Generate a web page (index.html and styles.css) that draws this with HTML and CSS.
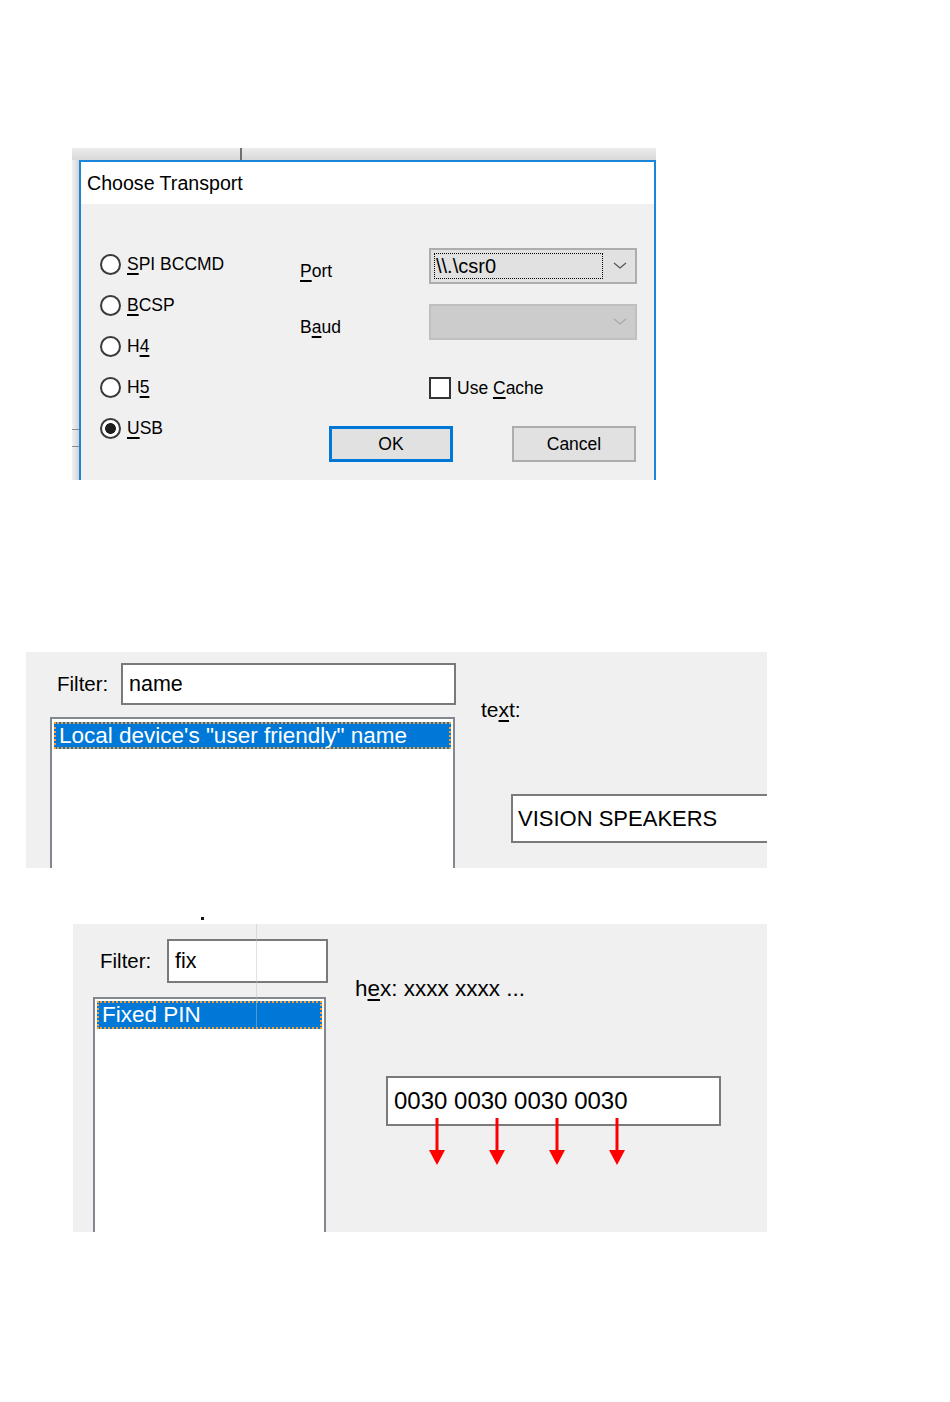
FILE: index.html
```html
<!DOCTYPE html>
<html>
<head>
<meta charset="utf-8">
<title>Transport and PS keys</title>
<link rel="stylesheet" href="styles.css">
</head>
<body>
<div class="shot1">
  <div class="dlg">
    <div class="titlebar">Choose Transport</div>
    <div class="dlg-body">
      <div class="radios">
        <div class="radio"><span class="rb"></span><span><u>S</u>PI BCCMD</span></div>
        <div class="radio"><span class="rb"></span><span><u>B</u>CSP</span></div>
        <div class="radio"><span class="rb"></span><span>H<u>4</u></span></div>
        <div class="radio"><span class="rb"></span><span>H<u>5</u></span></div>
        <div class="radio"><span class="rb on"></span><span><u>U</u>SB</span></div>
      </div>
      <div class="settings">
        <div class="field">
          <span class="flabel"><u>P</u>ort</span>
          <div class="combo">
            <span class="focus">\\.\csr0</span>
            <svg class="chev" width="14" height="8" viewBox="0 0 14 8"><polyline points="1,1 7,6 13,1" fill="none" stroke="#555" stroke-width="1.3"/></svg>
          </div>
        </div>
        <div class="field baud">
          <span class="flabel">B<u>a</u>ud</span>
          <div class="combo disabled">
            <svg class="chev" width="14" height="8" viewBox="0 0 14 8"><polyline points="1,1 7,6 13,1" fill="none" stroke="#a8a8a8" stroke-width="1.3"/></svg>
          </div>
        </div>
        <div class="check"><span class="cb"></span><span>Use <u>C</u>ache</span></div>
        <div class="buttons">
          <div class="btn default">OK</div>
          <div class="btn">Cancel</div>
        </div>
      </div>
    </div>
  </div>
</div>

<div class="shot2">
  <div class="left2">
    <div class="filter-row">
      <span class="flt-label">Filter:</span>
      <div class="input in2">name</div>
    </div>
    <div class="list list2">
      <div class="item item2">Local device's "user friendly" name</div>
    </div>
  </div>
  <div class="right2">
    <div class="plabel">te<u>x</u>t:</div>
    <div class="valbox val2">VISION SPEAKERS</div>
  </div>
</div>

<div class="mark"></div>

<div class="shot3">
  <div class="left3">
    <div class="filter-row fr3">
      <span class="flt-label fl3">Filter:</span>
      <div class="input in3">fix</div>
    </div>
    <div class="list list3">
      <div class="item item3">Fixed PIN</div>
    </div>
  </div>
  <div class="right3">
    <div class="plabel hexlabel">h<u>e</u>x: xxxx xxxx ...</div>
    <div class="valbox val3">0030 0030 0030 0030
      <svg class="arrows" width="335" height="95" viewBox="0 0 335 95">
        <g fill="#ff0000" stroke="#ff0000">
          <line x1="51" y1="42" x2="51" y2="76" stroke-width="3"/>
          <polygon points="43,74 59,74 51,89" stroke="none"/>
          <line x1="111" y1="42" x2="111" y2="76" stroke-width="3"/>
          <polygon points="103,74 119,74 111,89" stroke="none"/>
          <line x1="171" y1="42" x2="171" y2="76" stroke-width="3"/>
          <polygon points="163,74 179,74 171,89" stroke="none"/>
          <line x1="231" y1="42" x2="231" y2="76" stroke-width="3"/>
          <polygon points="223,74 239,74 231,89" stroke="none"/>
        </g>
      </svg>
    </div>
  </div>
</div>
</body>
</html>
```

FILE: styles.css
```css
* { box-sizing: border-box; }

body {
  margin: 0;
  background: #ffffff;
  color: #000;
  font-family: "Liberation Sans", Arial, sans-serif;
}

u {
  text-decoration-thickness: 2px;
  text-underline-offset: 3px;
}

/* ---------- Dialog screenshot ---------- */
.shot1 {
  position: relative;
  margin: 148px 0 0 72px;
  width: 584px;
  height: 332px;
  padding: 12px 0 0 7px;
  background:
    linear-gradient(to bottom, #ececec, #d9d9d9) left top / 100% 12px no-repeat,
    linear-gradient(to right, #f3f3f3, #d3d3d3) left top / 7px 100% no-repeat;
}
.shot1::before {
  content: "";
  position: absolute;
  left: 168px;
  top: 0;
  width: 2px;
  height: 12px;
  background: #707070;
}
.shot1::after {
  content: "";
  position: absolute;
  left: 0;
  top: 281px;
  width: 7px;
  height: 16px;
  border-top: 1px solid #8a8a8a;
  border-bottom: 1px solid #8a8a8a;
}

.dlg {
  width: 577px;
  height: 320px;
  border: 2px solid #1a86d9;
  border-bottom: none;
  display: flex;
  flex-direction: column;
}

.titlebar {
  height: 42px;
  flex: none;
  background: #fff;
  display: flex;
  align-items: center;
  padding-left: 6px;
  font-size: 19.6px;
}

.dlg-body {
  flex: 1;
  background: #f0f0f0;
  display: flex;
  font-size: 17.5px;
}

.radios {
  width: 219px;
  padding: 40px 0 0 19px;
  display: flex;
  flex-direction: column;
}
.radio {
  height: 41px;
  display: flex;
  align-items: center;
  gap: 6px;
}
.rb {
  width: 21px;
  height: 21px;
  border: 2px solid #3a3a3a;
  border-radius: 50%;
  background: #fff;
  flex: none;
}
.rb.on {
  background: radial-gradient(circle, #1e1e1e 0 5px, #fff 5.8px);
}

.settings {
  display: flex;
  flex-direction: column;
}
.field {
  display: flex;
  align-items: center;
  margin-top: 44px;
  height: 36px;
}
.field.baud { margin-top: 20px; }
.flabel {
  width: 129px;
  padding-top: 10px;
}
.combo {
  width: 208px;
  height: 36px;
  border: 2px solid #adadad;
  background: #e1e1e1;
  display: flex;
  align-items: center;
  padding: 3px 8px 3px 3px;
}
.combo.disabled {
  background: #cccccc;
  border-color: #bfbfbf;
}
.focus {
  width: 169px;
  height: 26px;
  border: 1px dotted #000;
  padding-left: 1px;
  font-size: 20px;
  line-height: 24px;
}
.chev { margin-left: auto; }

.check {
  margin-top: 37px;
  padding-left: 129px;
  display: flex;
  align-items: center;
  gap: 6px;
  height: 22px;
}
.cb {
  width: 22px;
  height: 22px;
  border: 2px solid #333;
  background: #fff;
}

.buttons {
  margin-top: 27px;
  padding-left: 29px;
  display: flex;
  gap: 59px;
}
.btn {
  width: 124px;
  height: 36px;
  border: 2px solid #adadad;
  background: #e1e1e1;
  display: flex;
  align-items: center;
  justify-content: center;
}
.btn.default {
  border: 3px solid #0078d7;
}

/* ---------- Filter panels ---------- */
.shot2 {
  margin: 172px 0 0 26px;
  width: 741px;
  height: 216px;
  background: #f0f0f0;
  display: flex;
  overflow: hidden;
}
.left2 {
  width: 429px;
  padding: 11px 0 0 24px;
  display: flex;
  flex-direction: column;
  flex: none;
}
.filter-row {
  display: flex;
  align-items: center;
  height: 42px;
  flex: none;
}
.flt-label {
  width: 71px;
  flex: none;
  padding-left: 7px;
  font-size: 20.5px;
}
.input {
  height: 100%;
  flex: none;
  border: 2px solid #7a7a7a;
  background: #fff;
  display: flex;
  align-items: center;
  padding-left: 6px;
  font-size: 21.5px;
}
.in2 { width: 335px; }

.list {
  flex: 1;
  border: 2px solid #828790;
  border-bottom: none;
  background: #fff;
  padding: 3px 2px 0 2px;
}
.list2 { margin-top: 12px; }
.item {
  background: #0078d7;
  color: #fff;
  border: 2px dotted #ff9a2e;
  padding-left: 3px;
  display: flex;
  align-items: center;
  font-size: 22.5px;
  white-space: nowrap;
}
.item2 { height: 27px; }

.right2 {
  padding: 44px 0 0 26px;
  flex: none;
}
.plabel {
  height: 28px;
  line-height: 28px;
  font-size: 21px;
  white-space: nowrap;
}
.hexlabel { font-size: 22.5px; }
.valbox {
  position: relative;
  border: 2px solid #7a7a7a;
  background: #fff;
  display: flex;
  align-items: center;
  white-space: nowrap;
}
.val2 {
  margin: 70px 0 0 30px;
  width: 320px;
  height: 49px;
  padding-left: 5px;
  font-size: 22px;
}

.mark {
  margin: 49px 0 0 201px;
  width: 3px;
  height: 3px;
  background: #151515;
}

.shot3 {
  position: relative;
  margin: 4px 0 0 73px;
  width: 694px;
  height: 308px;
  background: #f0f0f0;
  display: flex;
  overflow: hidden;
}
.shot3::after {
  content: "";
  position: absolute;
  left: 183px;
  top: 0;
  width: 1px;
  height: 106px;
  background: rgba(190, 190, 190, 0.45);
}
.left3 {
  width: 253px;
  padding: 15px 0 0 20px;
  display: flex;
  flex-direction: column;
  flex: none;
}
.fr3 { height: 44px; }
.fl3 { width: 74px; }
.in3 { width: 161px; }
.list3 {
  margin-top: 14px;
  width: 233px;
  padding-top: 2px;
}
.item3 { height: 28px; }

.right3 {
  padding: 51px 0 0 29px;
  flex: none;
}
.val3 {
  margin: 73px 0 0 31px;
  width: 335px;
  height: 50px;
  padding-left: 6px;
  font-size: 24px;
}
.arrows {
  position: absolute;
  left: -2px;
  top: -2px;
  overflow: visible;
}
```
